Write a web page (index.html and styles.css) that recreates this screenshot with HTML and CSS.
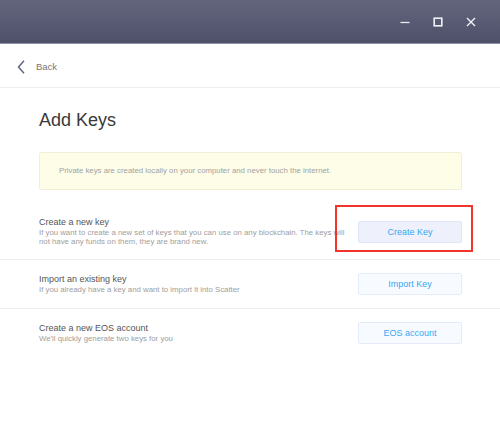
FILE: index.html
```html
<!DOCTYPE html>
<html>
<head>
<meta charset="utf-8">
<link rel="stylesheet" href="styles.css">
</head>
<body>
<header class="titlebar">
  <div class="controls">
    <svg class="ctl" width="10" height="10" viewBox="0 0 10 10"><path d="M0.5 5.5 H9.5" stroke="#e9eaf0" stroke-width="1.3" fill="none"/></svg>
    <svg class="ctl" width="10" height="10" viewBox="0 0 10 10"><rect x="1.2" y="1.2" width="7.6" height="7.6" stroke="#f1f2f6" stroke-width="1.6" fill="none"/></svg>
    <svg class="ctl" width="10" height="10" viewBox="0 0 10 10"><path d="M1 1 L9 9 M9 1 L1 9" stroke="#f1f2f6" stroke-width="1.4" fill="none"/></svg>
  </div>
</header>
<nav class="backbar">
  <svg class="chev" width="8" height="14" viewBox="0 0 8 14"><path d="M7 0.8 L1.5 7 L7 13.2" stroke="#5c607e" stroke-width="1.4" fill="none"/></svg>
  <span class="back">Back</span>
</nav>
<main class="content">
  <h1 class="heading">Add Keys</h1>
  <div class="notice">Private keys are created locally on your computer and never touch the internet.</div>
</main>
<section class="rows">
  <div class="row first">
    <div class="info">
      <div class="rtitle">Create a new key</div>
      <div class="rdesc">If you want to create a new set of keys that you can use on any blockchain. The keys will<br>not have any funds on them, they are brand new.</div>
    </div>
    <button class="btn active">Create Key</button>
  </div>
  <div class="row">
    <div class="info">
      <div class="rtitle">Import an existing key</div>
      <div class="rdesc">If you already have a key and want to import it into Scatter</div>
    </div>
    <button class="btn">Import Key</button>
  </div>
  <div class="row last">
    <div class="info">
      <div class="rtitle">Create a new EOS account</div>
      <div class="rdesc">We'll quickly generate two keys for you</div>
    </div>
    <button class="btn">EOS account</button>
  </div>
</section>
<div class="highlight"></div>
</body>
</html>
```
FILE: styles.css
```css
html, body {
  margin: 0;
  padding: 0;
  background: #ffffff;
  font-family: "Liberation Sans", Arial, sans-serif;
}
body {
  width: 500px;
  height: 444px;
  overflow: hidden;
  position: relative;
}
.titlebar {
  height: 44px;
  box-sizing: border-box;
  background: linear-gradient(to bottom, #62657c, #4e5169);
  border-bottom: 1px solid #8e90a3;
  display: flex;
  justify-content: flex-end;
  align-items: center;
}
.controls {
  display: flex;
  gap: 23px;
  padding-right: 24px;
  align-items: center;
  margin-top: 1px;
}
.ctl {
  display: block;
}
.backbar {
  height: 44px;
  box-sizing: border-box;
  border-bottom: 1px solid #eeeeee;
  display: flex;
  align-items: center;
  padding-left: 17px;
}
.chev {
  display: block;
  margin-top: 2px;
}
.back {
  margin-left: 11px;
  font-size: 9.5px;
  color: #777777;
  margin-top: 2px;
}
.content {
  padding: 0 38px 0 39px;
}
.heading {
  margin: 22px 0 0 0;
  font-size: 18px;
  line-height: 20px;
  font-weight: normal;
  color: #3a3a3a;
}
.notice {
  margin-top: 22px;
  border: 1px solid #f1efd6;
  border-radius: 2px;
  background: #fdfde8;
  padding: 13px 19px;
  font-size: 7.8px;
  line-height: 10px;
  color: #a3a3a3;
}
.rows {
  margin-top: 14px;
}
.row {
  display: flex;
  align-items: center;
  justify-content: space-between;
  padding: 13px 38px 13px 39px;
  border-bottom: 1px solid #eeeeee;
}
.row.last {
  border-bottom: none;
}
.info {
  flex: 1;
  min-width: 0;
}
.rtitle {
  font-size: 9px;
  line-height: 11px;
  color: #555555;
}
.rdesc {
  margin-top: 1px;
  font-size: 7.8px;
  line-height: 8.5px;
  color: #9e9e9e;
  white-space: nowrap;
}
.btn {
  flex: none;
  width: 104px;
  height: 22px;
  box-sizing: border-box;
  border: 1px solid #e3ecf8;
  border-radius: 2px;
  background: #f7fbff;
  color: #36a7f2;
  font-family: "Liberation Sans", Arial, sans-serif;
  font-size: 9px;
  padding: 0;
}
.btn.active {
  background: #eef1fc;
  border-color: #e0e6f7;
}
.highlight {
  position: absolute;
  left: 335px;
  top: 205px;
  width: 138px;
  height: 47px;
  box-sizing: border-box;
  border: 2px solid #f2352c;
}
```
